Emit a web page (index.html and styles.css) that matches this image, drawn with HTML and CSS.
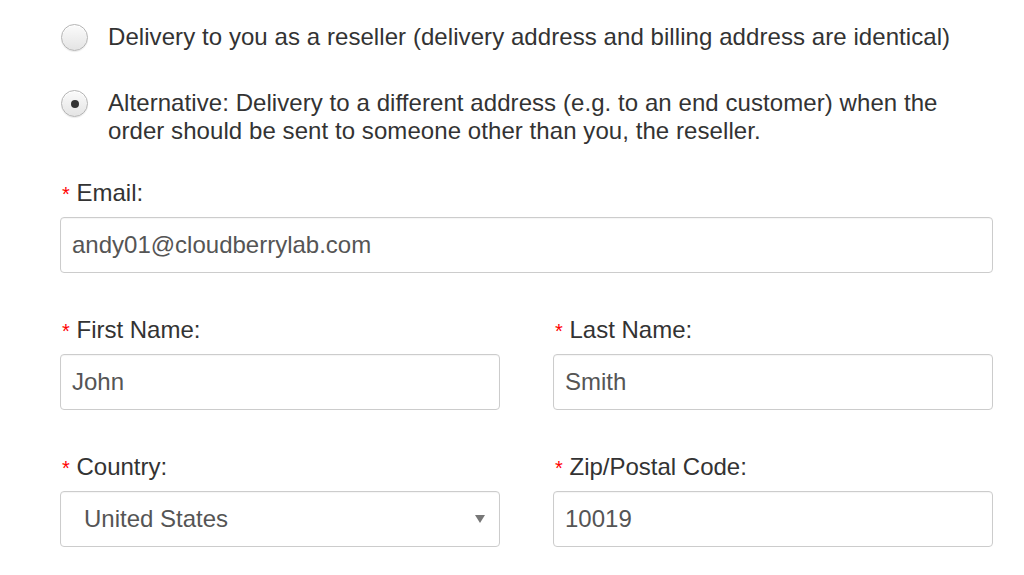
FILE: index.html
```html
<!DOCTYPE html>
<html>
<head>
<meta charset="utf-8">
<link rel="stylesheet" href="styles.css">
</head>
<body>
<form class="form">
  <div class="options">
    <label class="option">
      <span class="radio"></span>
      <span class="option-text">Delivery to you as a reseller (delivery address and billing address are identical)</span>
    </label>
    <label class="option">
      <span class="radio checked"></span>
      <span class="option-text">Alternative: Delivery to a different address (e.g. to an end customer) when the order should be sent to someone other than you, the reseller.</span>
    </label>
  </div>

  <div class="field">
    <div class="label"><span class="req">*</span> Email:</div>
    <div class="input">andy01@cloudberrylab.com</div>
  </div>

  <div class="row">
    <div class="field">
      <div class="label"><span class="req">*</span> First Name:</div>
      <div class="input">John</div>
    </div>
    <div class="field">
      <div class="label"><span class="req">*</span> Last Name:</div>
      <div class="input">Smith</div>
    </div>
  </div>

  <div class="row">
    <div class="field">
      <div class="label"><span class="req">*</span> Country:</div>
      <div class="input select"><span>United States</span><span class="caret"></span></div>
    </div>
    <div class="field">
      <div class="label"><span class="req">*</span> Zip/Postal Code:</div>
      <div class="input">10019</div>
    </div>
  </div>
</form>
</body>
</html>
```

FILE: styles.css
```css
html, body {
  margin: 0;
  padding: 0;
  background: #ffffff;
}

body {
  font-family: "Liberation Sans", Arial, sans-serif;
  font-size: 24px;
  color: #333333;
}

.form {
  width: 933px;
  margin-left: 60px;
  padding-top: 23px;
  display: flex;
  flex-direction: column;
}

.options {
  display: flex;
  flex-direction: column;
  gap: 38px;
  padding-left: 1px;
}

.option {
  display: flex;
  align-items: flex-start;
  gap: 20px;
  line-height: 28px;
}

.radio {
  flex: none;
  width: 25px;
  height: 25px;
  margin-top: 1px;
  border-radius: 50%;
  border: 1px solid #b4b4b4;
  background: linear-gradient(#fbfbfb, #e4e4e4);
  box-shadow: inset 0 1px 0 #ffffff, 0 1px 1px rgba(0,0,0,0.08);
  display: flex;
  align-items: center;
  justify-content: center;
}

.radio.checked::after {
  content: "";
  width: 8px;
  height: 8px;
  border-radius: 50%;
  background: #333333;
}

.option-text {
  width: 850px;
  letter-spacing: 0.07px;
}

.field {
  display: flex;
  flex-direction: column;
  margin-top: 34px;
}

.row {
  display: flex;
  gap: 53px;
}

.row .field {
  flex: 1;
  margin-top: 43px;
}

.label {
  line-height: 28px;
  margin-bottom: 9px;
  padding-left: 2px;
}

.req {
  color: #ff0000;
  font-size: 20px;
}

.input {
  height: 54px;
  border: 1px solid #cccccc;
  border-radius: 4px;
  padding: 0 11px;
  display: flex;
  align-items: center;
  color: #555555;
  box-shadow: inset 0 1px 1px rgba(0,0,0,0.04);
}

.select {
  padding-left: 23px;
  justify-content: space-between;
  padding-right: 14px;
}

.caret {
  width: 0;
  height: 0;
  border-left: 5px solid transparent;
  border-right: 5px solid transparent;
  border-top: 8px solid #777777;
}
```
